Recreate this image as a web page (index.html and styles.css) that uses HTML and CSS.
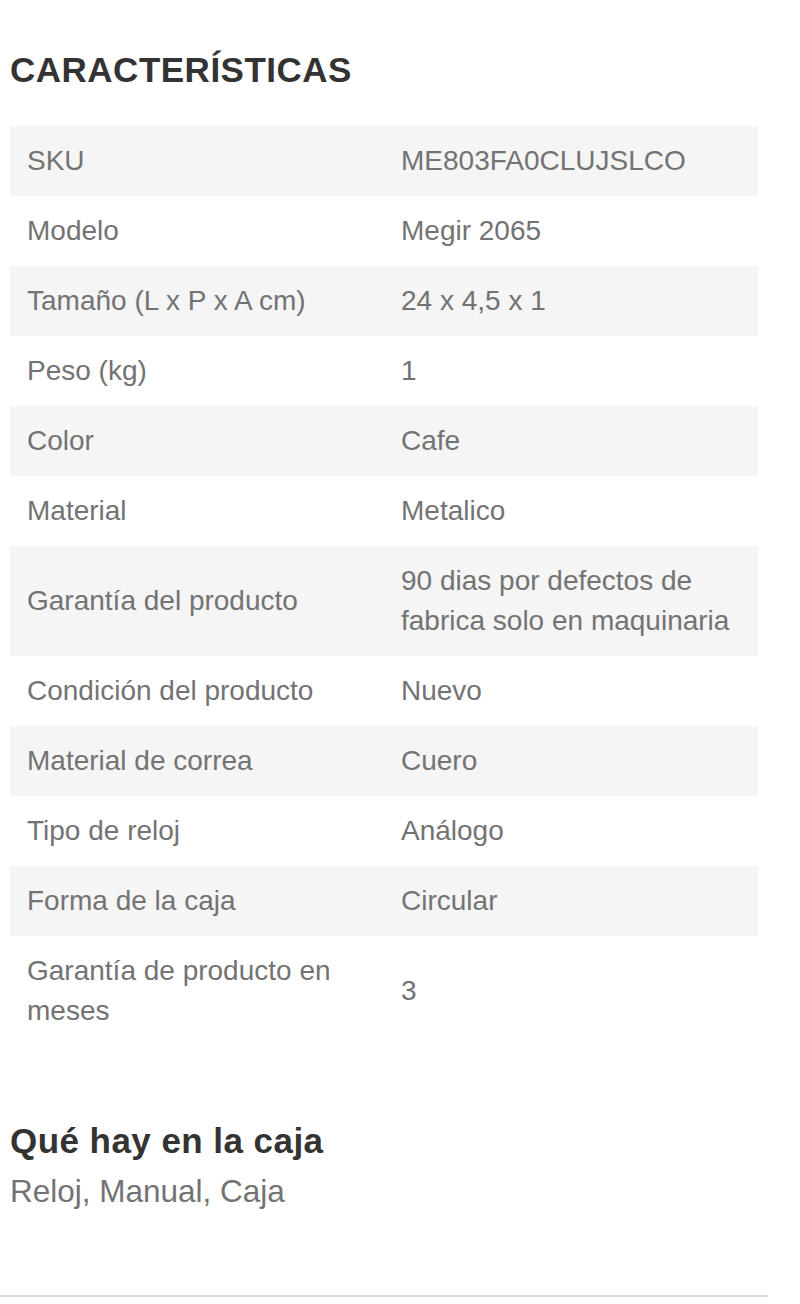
FILE: index.html
```html
<!DOCTYPE html>
<html>
<head>
    <title>Características</title>
    <link rel="stylesheet" href="styles.css">
</head>
<body>
    <div class="product-details">
        <h2 class="section-title">CARACTERÍSTICAS</h2>
        <table class="specs">
            <tr><td>SKU</td><td>ME803FA0CLUJSLCO</td></tr>
            <tr><td>Modelo</td><td>Megir 2065</td></tr>
            <tr><td>Tamaño (L x P x A cm)</td><td>24 x 4,5 x 1</td></tr>
            <tr><td>Peso (kg)</td><td>1</td></tr>
            <tr><td>Color</td><td>Cafe</td></tr>
            <tr><td>Material</td><td>Metalico</td></tr>
            <tr><td>Garantía del producto</td><td>90 dias por defectos de fabrica solo en maquinaria</td></tr>
            <tr><td>Condición del producto</td><td>Nuevo</td></tr>
            <tr><td>Material de correa</td><td>Cuero</td></tr>
            <tr><td>Tipo de reloj</td><td>Análogo</td></tr>
            <tr><td>Forma de la caja</td><td>Circular</td></tr>
            <tr><td>Garantía de producto en meses</td><td>3</td></tr>
        </table>

        <div class="box-content">
            <h3 class="box-title">Qué hay en la caja</h3>
            <p class="box-items">Reloj, Manual, Caja</p>
        </div>
    </div>
    <hr class="divider">
</body>
</html>
```
FILE: styles.css
```css
* {
    margin: 0;
    padding: 0;
    box-sizing: border-box;
    font-family: "Liberation Sans", Arial, sans-serif;
}

body {
    background: #fff;
    width: 768px;
}

.product-details {
    padding: 46px 10px 0 10px;
}

.section-title {
    font-size: 35px;
    font-weight: bold;
    letter-spacing: 0.5px;
    color: #333;
    line-height: 48px;
    margin-bottom: 32px;
}

.specs {
    width: 748px;
    border-collapse: collapse;
    table-layout: fixed;
}

.specs td {
    width: 50%;
    padding: 15px 17px;
    font-size: 28px;
    line-height: 40px;
    color: #737373;
    vertical-align: middle;
}

.specs tr:nth-child(odd) td {
    background-color: #f5f5f5;
}

.specs tr:last-child td {
    padding-bottom: 18px;
}

.box-content {
    margin-top: 70px;
}

.box-title {
    font-size: 35px;
    font-weight: bold;
    letter-spacing: 0.45px;
    color: #333;
    line-height: 44px;
}

.box-items {
    font-size: 31.5px;
    color: #737373;
    line-height: 44px;
    margin-top: 6px;
}

.divider {
    border: none;
    border-top: 2px solid #ddd;
    margin-top: 82px;
}
```
